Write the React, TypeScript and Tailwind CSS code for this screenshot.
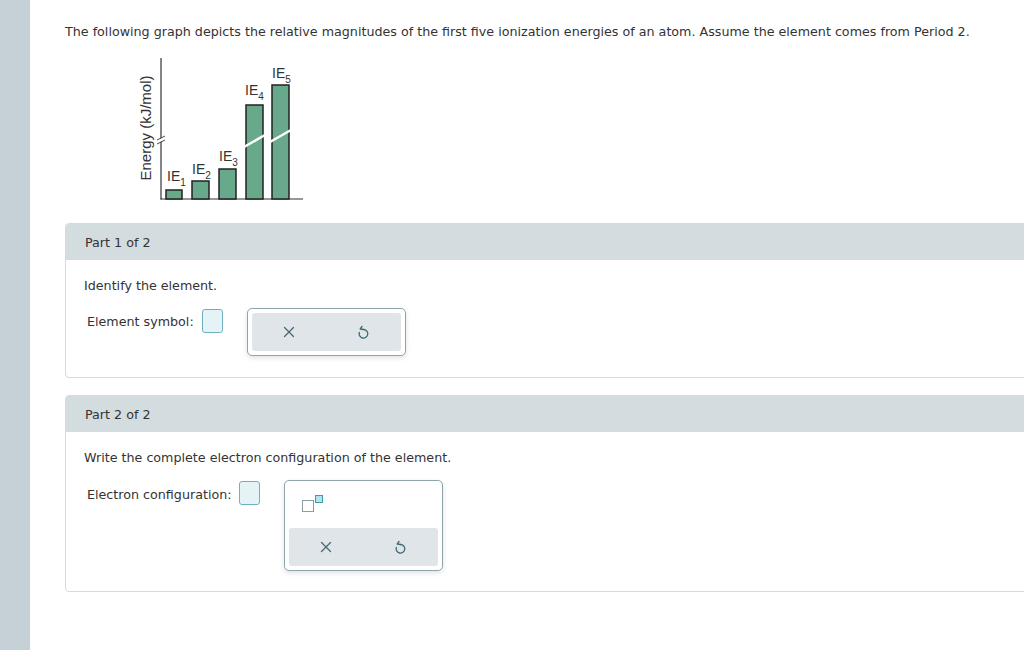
import React from "react";

const textFont = { fontFamily: '"DejaVu Sans", Verdana, sans-serif' };

const bars = [
  { x: 46, w: 16, top: 139, label: "1", lx: 47, ly: 130 },
  { x: 72, w: 17, top: 130, label: "2", lx: 72, ly: 123 },
  { x: 99, w: 17, top: 118, label: "3", lx: 99, ly: 110 },
  { x: 126, w: 17, top: 54, label: "4", lx: 125, ly: 44, brk: [95, 85] },
  { x: 152, w: 17, top: 34, label: "5", lx: 152, ly: 27, brk: [90, 80] },
];

function EnergyGraph() {
  return (
    <svg width="190" height="155" viewBox="0 0 190 155" className="block ml-[55px] mt-[11px]">
      <g fontFamily='"Liberation Sans", Arial, sans-serif' fill="#333">
        <text x="0" y="0" fontSize="15" textAnchor="middle" transform="translate(31 77) rotate(-90)">
          Energy (kJ/mol)
        </text>
        {bars.map((b) => (
          <text key={b.label} x={b.lx} y={b.ly} fontSize="14">
            IE<tspan fontSize="10" dy="5">{b.label}</tspan>
          </text>
        ))}
      </g>
      <line x1="41" y1="7" x2="41" y2="148.5" stroke="#333" strokeWidth="1.2" />
      <line x1="40.5" y1="148" x2="183" y2="148" stroke="#333" strokeWidth="1.2" />
      {/* axis break */}
      <line x1="37" y1="91" x2="45" y2="87" stroke="#fff" strokeWidth="3" />
      <line x1="37" y1="93" x2="45" y2="89" stroke="#333" strokeWidth="0.9" />
      <line x1="37" y1="89" x2="45" y2="85" stroke="#333" strokeWidth="0.9" />
      {bars.map((b) => (
        <g key={b.x}>
          <rect x={b.x} y={b.top} width={b.w} height={148 - b.top} fill="#67a98a" stroke="#222" strokeWidth="1.5" />
          {b.brk && (
            <line x1={b.x - 2} y1={b.brk[0] + 1} x2={b.x + b.w + 2} y2={b.brk[1] - 1} stroke="#fff" strokeWidth="2.5" />
          )}
        </g>
      ))}
    </svg>
  );
}

function XIcon() {
  return (
    <svg width="12" height="12" viewBox="0 0 12 12" fill="none" stroke="#4b6773" strokeWidth="1.3" strokeLinecap="round">
      <path d="M1.5 1.5 L10.5 10.5 M10.5 1.5 L1.5 10.5" />
    </svg>
  );
}

function UndoIcon() {
  return (
    <svg width="13" height="14" viewBox="0 0 13 14" fill="none" stroke="#3f6a76" strokeWidth="1.3" strokeLinecap="round" strokeLinejoin="round">
      <path d="M6.5 4.5 A4.3 4.3 0 1 1 2.4 7.4" />
      <path d="M5 1.5 L3.2 4 L6.5 4.5" />
    </svg>
  );
}

function ToolBar() {
  return (
    <div className="flex h-[38px] items-center justify-around rounded-[3px] bg-[#dfe5e8]">
      <XIcon />
      <UndoIcon />
    </div>
  );
}

function AnswerBox() {
  return <div className="h-[24px] w-[21px] rounded-[3px] border border-[#6fb0c0] bg-[#e5f3f7]" />;
}

function Card({ part, children }: { part: string; children: React.ReactNode }) {
  return (
    <section className="w-[1000px] rounded-[4px] border border-[#d3dbde] bg-white">
      <div className="flex h-[36px] items-center rounded-t-[3px] bg-[#d3dcdf] px-[19px] pt-[2px] text-[12.7px] text-[#333]">
        {part}
      </div>
      <div className="px-[18px] pb-[20px]">{children}</div>
    </section>
  );
}

export default function App() {
  return (
    <div className="flex h-[650px] w-[1024px] overflow-hidden bg-white text-[#333]" style={textFont}>
      <aside className="w-[30px] shrink-0 bg-[#c5d1d6]" />
      <main className="flex-1 pl-[35px] pt-[24px]">
        <p className="text-[12.7px] leading-[16px]">
          The following graph depicts the relative magnitudes of the first five ionization energies of an atom. Assume the element comes from Period 2.
        </p>
        <EnergyGraph />

        <div className="mt-[17px]">
          <Card part="Part 1 of 2">
            <p className="pt-[18px] text-[12.7px] leading-[16px]">Identify the element.</p>
            <div className="mt-[14px] mb-[1px] flex items-start">
              <span className="ml-[3px] mt-[6px] text-[12.7px] leading-[16px]">Element symbol:</span>
              <div className="ml-[8px] mt-[1px]">
                <AnswerBox />
              </div>
              <div className="ml-[24px] w-[159px] rounded-[5px] border border-[#8ea5ae] bg-white p-[4px] shadow-[0_2px_5px_rgba(0,0,0,0.12)]">
                <ToolBar />
              </div>
            </div>
          </Card>
        </div>

        <div className="mt-[17px]">
          <Card part="Part 2 of 2">
            <p className="pt-[18px] text-[12.7px] leading-[16px]">Write the complete electron configuration of the element.</p>
            <div className="mt-[14px] flex items-start">
              <span className="ml-[3px] mt-[7px] text-[12.7px] leading-[16px]">Electron configuration:</span>
              <div className="ml-[7px] mt-[1px]">
                <AnswerBox />
              </div>
              <div className="ml-[24px] w-[159px] rounded-[5px] border border-[#8ea5ae] bg-white p-[4px] shadow-[0_2px_5px_rgba(0,0,0,0.12)]">
                <div className="relative h-[43px]">
                  <div className="absolute left-[13px] top-[15px] h-[12px] w-[12px] border-[1.5px] border-[#8c9ca2] bg-white" />
                  <div className="absolute left-[26px] top-[10px] h-[8px] w-[8px] border-[1.5px] border-[#3a9bb0] bg-[#b8e2ea]" />
                </div>
                <ToolBar />
              </div>
            </div>
          </Card>
        </div>
      </main>
    </div>
  );
}
